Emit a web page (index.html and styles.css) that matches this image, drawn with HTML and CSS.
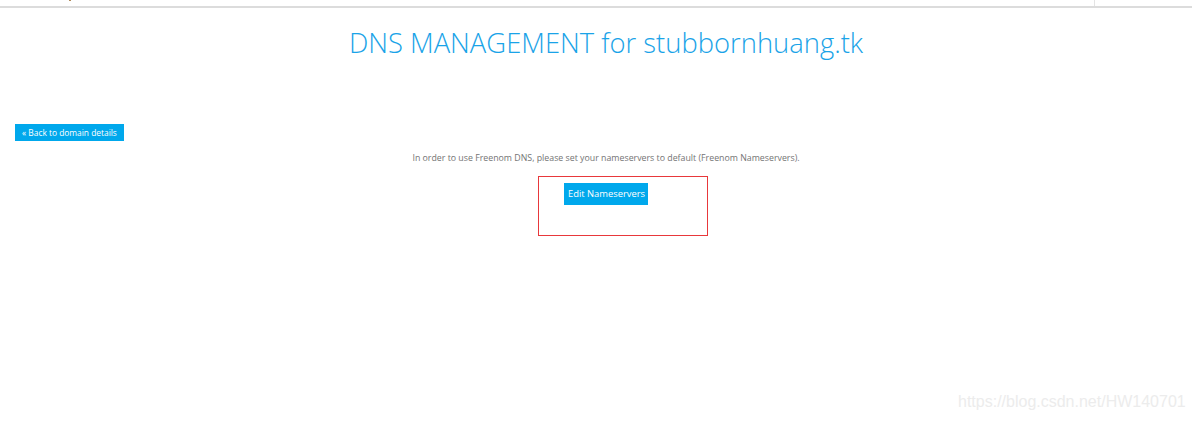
FILE: index.html
```
<!DOCTYPE html>
<html>
<head>
<meta charset="utf-8">
<link rel="stylesheet" href="styles.css">
</head>
<body>
<div class="topbar">
  <span class="dot"></span>
  <span class="divider"></span>
</div>
<main class="page">
  <h1 class="title">DNS MANAGEMENT for stubbornhuang.tk</h1>
  <div class="back-row"><a class="btn btn-back" href="#">« Back to domain details</a></div>
  <p class="notice">In order to use Freenom DNS, please set your nameservers to default (Freenom Nameservers).</p>
  <div class="action-row"><a class="btn btn-edit" href="#">Edit Nameservers</a></div>
  <div class="highlight"></div>
</main>
<div class="watermark">https://blog.csdn.net/HW140701</div>
</body>
</html>
```
FILE: styles.css
```
html, body {
  margin: 0;
  padding: 0;
  background: #fff;
  font-family: "Open Sans", "Liberation Sans", sans-serif;
}
body {
  width: 1192px;
  height: 422px;
  position: relative;
  overflow: hidden;
}
.topbar {
  height: 6px;
  border-bottom: 2px solid #dcdcdc;
  position: relative;
}
.dot {
  position: absolute;
  left: 69px;
  top: 0;
  width: 2px;
  height: 1px;
  background: #b08a5a;
}
.divider {
  position: absolute;
  left: 1094px;
  top: 0;
  width: 1px;
  height: 6px;
  background: #e4e4e4;
}
.page {
  padding: 0 0 0 15px;
}
.title {
  margin: 19px 0 0;
  padding-left: 5px;
  text-align: center;
  font-weight: 300;
  font-size: 27.4px;
  line-height: 32px;
  color: #1aa3e8;
}
.back-row {
  margin-top: 65px;
  display: flex;
}
.btn {
  display: inline-block;
  background: #00a8ec;
  color: #fff;
  text-decoration: none;
  font-weight: 500;
}
.btn-back {
  font-size: 8.4px;
  line-height: 17px;
  height: 17px;
  padding: 0 7px;
}
.notice {
  margin: 11px 0 0;
  padding-left: 5px;
  text-align: center;
  font-size: 8.8px;
  line-height: 12px;
  color: #747474;
}
.action-row {
  margin-top: 19px;
  padding-left: 5px;
  display: flex;
  justify-content: center;
}
.btn-edit {
  font-size: 9.4px;
  line-height: 22px;
  height: 22px;
  padding: 0 3px 0 4px;
}
.highlight {
  position: absolute;
  left: 538px;
  top: 176px;
  width: 168px;
  height: 58px;
  border: 1px solid #e8383b;
}
.watermark {
  position: absolute;
  left: 958px;
  top: 393px;
  font-family: "Liberation Sans", Arial, sans-serif;
  font-size: 16px;
  color: #ececec;
}
```
